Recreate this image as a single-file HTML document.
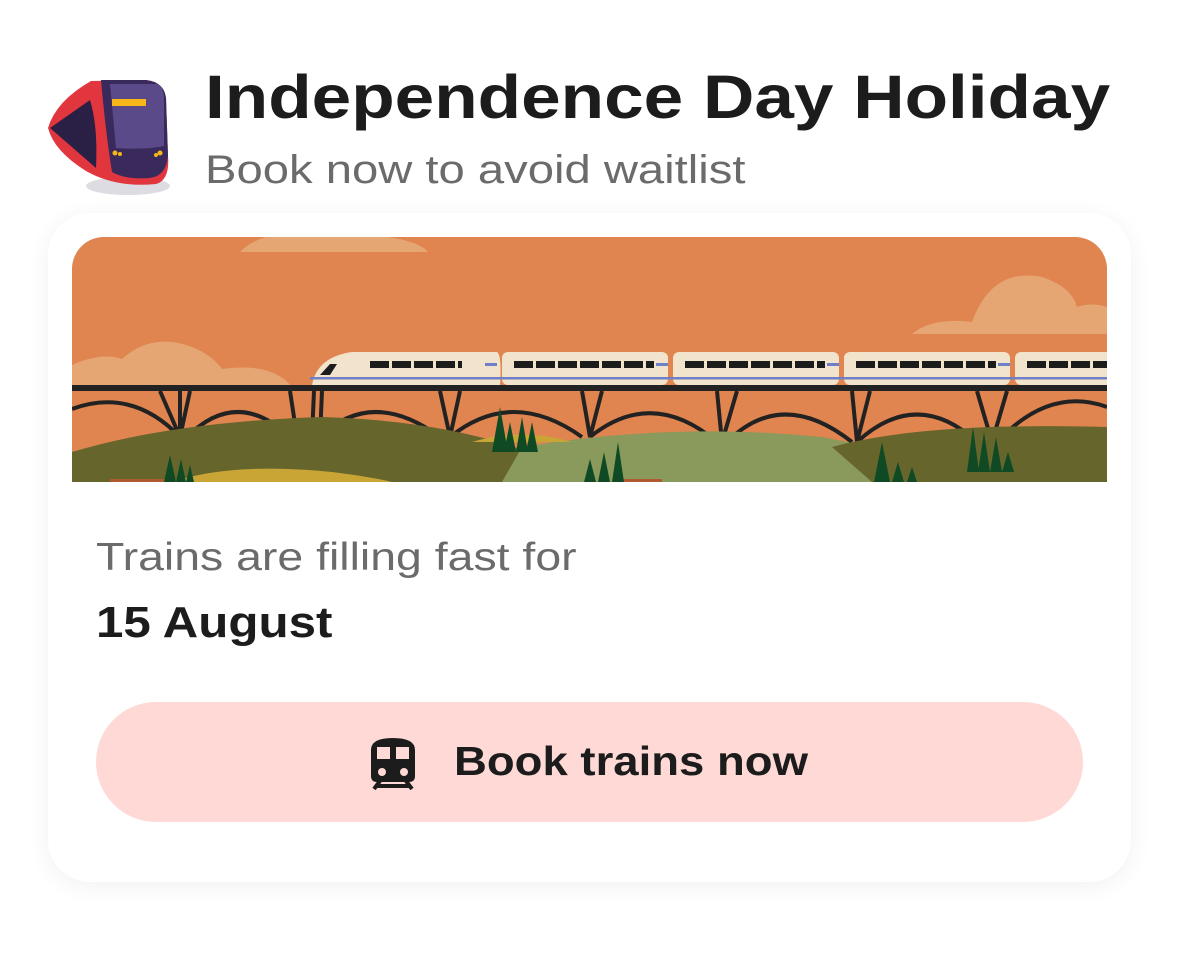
<!DOCTYPE html>
<html><head><meta charset="utf-8"><style>
*{margin:0;padding:0;box-sizing:border-box}
body{width:1179px;height:957px;background:#fff;font-family:"Liberation Sans",sans-serif;position:relative;overflow:hidden}
.t,.s,.l1,.l2,.bt{transform-origin:0 50%;white-space:nowrap;position:absolute}
.t{left:205px;top:62px;font-size:61px;font-weight:bold;color:#1c1c1c;transform:scaleX(1.166)}
.s{left:205px;top:148px;font-size:40px;color:#6b6b6b;transform:scaleX(1.18)}
.card{position:absolute;left:48px;top:213px;width:1083px;height:669px;background:#fff;border-radius:42px;box-shadow:0 4px 24px rgba(0,0,0,0.06)}
.ban{position:absolute;left:72px;top:237px;width:1035px;height:245px;border-radius:32px 32px 0 0;overflow:hidden}
.l1{left:96px;top:536px;font-size:39px;color:#6b6b6b;transform:scaleX(1.19)}
.l2{left:96px;top:598px;font-size:44px;font-weight:bold;color:#1c1c1c;transform:scaleX(1.12)}
.btn{position:absolute;left:96px;top:702px;width:987px;height:120px;border-radius:60px;background:#ffd9d6}
.bt{left:454px;top:738px;font-size:41px;font-weight:bold;color:#1c1c1c;transform:scaleX(1.11)}
</style></head><body>
<svg style="position:absolute;left:46px;top:76px" width="126" height="124" viewBox="0 0 126 124">
<ellipse cx="82" cy="110" rx="42" ry="9" fill="#dcdce2"/>
<path d="M45 5 Q10 25 2 52 Q8 75 40 95 Q70 112 110 108 Q124 104 122 80 L120 22 Q118 6 100 4 Z" fill="#e2363f"/>
<path d="M55 4 L100 4 Q118 6 120 22 L122 80 Q120 100 104 102 Q80 104 66 96 Q60 60 55 4Z" fill="#3a2a5c"/>
<path d="M64 8 L112 8 Q118 12 118 24 L118 70 Q100 74 70 72 Z" fill="#5a4a8a"/>
<path d="M4 52 L44 24 Q52 50 50 92 Z" fill="#2a1f44"/>
<rect x="66" y="23" width="34" height="7" fill="#f7b718"/>
<circle cx="69" cy="77" r="2.5" fill="#f7b718"/><circle cx="74" cy="78" r="2" fill="#f7b718"/>
<circle cx="114" cy="77" r="2.5" fill="#f7b718"/><circle cx="110" cy="79" r="2" fill="#f7b718"/>
</svg>
<div class="t">Independence Day Holiday</div>
<div class="s">Book now to avoid waitlist</div>
<div class="card"></div>
<div class="ban">
<svg width="1035" height="245" viewBox="0 0 1035 245">
<rect width="1035" height="245" fill="#e08550"/>
<path d="M168 15 Q188 -5 230 -5 Q340 -5 356 15Z" fill="#e6a673"/>
<path d="M0 150 L0 128 Q30 115 50 122 Q80 95 120 110 Q140 118 150 132 Q200 125 220 150Z" fill="#e6a673"/>
<path d="M840 97 Q860 80 900 85 Q920 30 970 40 Q1000 50 1005 70 Q1020 65 1035 70 L1035 97Z" fill="#e6a673"/>
<g>
<path d="M240 148 Q245 120 280 115 L425 115 Q430 118 428 148Z" fill="#f2e4cc"/>
<rect x="430" y="115" width="166" height="33" rx="6" fill="#f2e4cc"/>
<rect x="601" y="115" width="166" height="33" rx="6" fill="#f2e4cc"/>
<rect x="772" y="115" width="166" height="33" rx="6" fill="#f2e4cc"/>
<rect x="943" y="115" width="100" height="33" rx="6" fill="#f2e4cc"/>
<rect x="238" y="140" width="800" height="2.5" fill="#6f80c8"/>
<path d="M248 138 L258 127 L265 127 L258 138Z" fill="#1c1c1c"/>
<g stroke="#1c1c1c" stroke-width="7" stroke-dasharray="19 3">
<path d="M298 127.5H390M442 127.5H582M613 127.5H753M784 127.5H924M955 127.5H1035"/>
</g>
<g fill="#6f80c8"><rect x="413" y="126" width="12" height="3"/><rect x="584" y="126" width="12" height="3"/><rect x="755" y="126" width="12" height="3"/><rect x="926" y="126" width="12" height="3"/></g>
</g>
<rect x="0" y="148" width="1035" height="6" fill="#222"/>
<g fill="none" stroke="#222" stroke-width="4">
<path d="M0 172 Q60 150 108 200 M115 200 Q165 150 218 200 M248 200 Q300 150 368 200 M378 200 Q440 150 510 200 M518 200 Q580 150 645 205 M655 205 Q710 150 780 205 M785 205 Q845 150 905 205 M930 200 Q980 150 1035 170"/>
<path d="M88 154 L108 200 L118 154 M108 154V200 M218 154 L225 200 M242 154L240 200M250 154L248 200 M368 154 L378 200 L388 154 M510 154 L518 200 L530 154 M645 154 L650 205 L665 154 M780 154 L785 205 L798 154 M905 154 L920 205 L935 154"/>
</g>
<path d="M0 215 Q100 185 250 180 Q420 185 520 245 L0 245Z" fill="#66652c"/>
<path d="M450 210 Q600 185 750 200 Q900 230 1000 245 L430 245Z" fill="#8a9a5c"/>
<path d="M760 210 Q850 185 1035 190 L1035 245 L800 245Z" fill="#66652c"/>
<path d="M100 245 Q160 225 260 235 Q300 240 320 245Z" fill="#c9a535"/>
<path d="M400 205 Q450 190 500 205 Z" fill="#c9a535"/>
<rect x="38" y="242" width="60" height="3" fill="#b05a30"/><rect x="550" y="242" width="40" height="3" fill="#b05a30"/>
<g fill="#0f4a25">
<path d="M420 215 L428 170 L436 215Z M432 215 L438 185 L444 215Z M444 215 L450 180 L456 215Z M454 215 L460 185 L466 215Z"/>
<path d="M92 245 L98 218 L104 245Z M104 245 L109 222 L114 245Z M114 245 L118 228 L122 245Z"/>
<path d="M512 245 L518 222 L524 245Z M526 245 L532 215 L538 245Z M540 245 L546 205 L552 245Z"/>
<path d="M895 235 L901 190 L907 235Z M906 235 L912 195 L918 235Z M918 235 L924 200 L930 235Z M930 235 L936 215 L942 235Z"/>
<path d="M802 245 L810 205 L818 245Z M820 245 L826 225 L832 245Z M835 245 L840 230 L845 245Z"/>
</g>
</svg>
</div>
<div class="l1">Trains are filling fast for</div>
<div class="l2">15 August</div>
<div class="btn"></div>
<svg style="position:absolute;left:368px;top:736px" width="50" height="54" viewBox="0 0 50 54">
<path d="M3 14 Q3 2 25 2 Q47 2 47 14 L47 40 Q47 46 41 46 L9 46 Q3 46 3 40Z" fill="#1c1c1c"/>
<rect x="9" y="11" width="13" height="12" fill="#ffd9d6"/><rect x="28" y="11" width="13" height="12" fill="#ffd9d6"/>
<circle cx="14" cy="36" r="4" fill="#ffd9d6"/><circle cx="36" cy="36" r="4" fill="#ffd9d6"/>
<path d="M12 45 L6 53 M38 45 L44 53 M9 50 L41 50" stroke="#1c1c1c" stroke-width="4" fill="none"/>
</svg>
<div class="bt">Book trains now</div>
</body></html>
